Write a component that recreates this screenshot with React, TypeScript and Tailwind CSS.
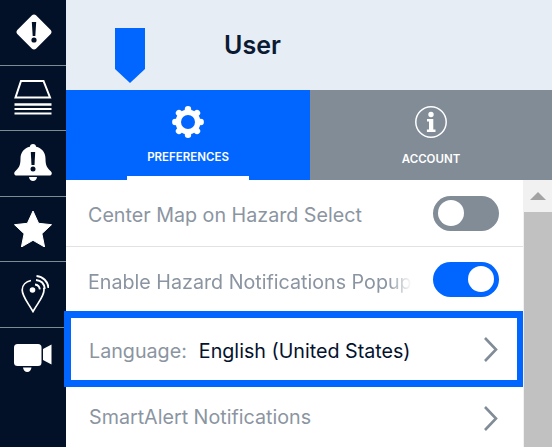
import * as React from "react";

const SideItem = ({ children, last }: { children: React.ReactNode; last?: boolean }) => (
  <div className={`flex h-[65.5px] items-center justify-center ${last ? "" : "border-b border-[#7f8a97]"}`}>
    {children}
  </div>
);

const Toggle = ({ on }: { on?: boolean }) => (
  <div className={`flex h-[35px] w-[66px] items-center rounded-full px-[5px] ${on ? "justify-end bg-[#0066ff]" : "justify-start bg-[#818c97]"}`}>
    <div className="h-[26px] w-[26px] rounded-full bg-white" />
  </div>
);

const Chevron = () => (
  <svg width="15" height="27" viewBox="0 0 15 27" fill="none">
    <path d="M2 2l11 11.5L2 25" stroke="#818c97" strokeWidth="2.6" />
  </svg>
);

export default function App() {
  return (
    <div className="flex h-[447px] w-[552px] overflow-hidden bg-white font-['Inter',sans-serif]">
      <div className="w-[66px] shrink-0 bg-[#021028]">
        <SideItem>
          <svg width="36" height="36" viewBox="0 0 36 36" className="-mr-[1px]">
            <path d="M18 .5c.8 0 1.500.3 2 .8L34.700 16c1.100 1.100 1.100 2.900 0 4L20 34.700c-1.100 1.100-2.900 1.100-4 0L1.300 20c-1.100-1.100-1.100-2.900 0-4L16 1.300c.5-.5 1.200-.8 2-.8z" fill="#fff" />
            <path d="M15.800 8h4.400l-.9 14h-2.600z" fill="#021028" />
            <circle cx="18" cy="26" r="2.600" fill="#021028" />
          </svg>
        </SideItem>
        <SideItem>
          <svg width="38" height="38" viewBox="0 0 38 38" fill="none" className="mt-[-1px]">
            <path d="M7 3h22.500L36 19.500H1.500z" stroke="#fff" strokeWidth="2" />
            <path d="M0.500 26.500h37" stroke="#fff" strokeWidth="2.500" />
            <path d="M0.500 31h37M0.500 35.500h37" stroke="#fff" strokeWidth="2" />
          </svg>
        </SideItem>
        <SideItem>
          <svg width="38" height="37" viewBox="0 0 38 37" className="mt-[-1px]">
            <path d="M19 0c1.900 0 3 1.200 3.100 2.800C27.800 4 31.500 8.500 31.500 14.500c0 7 1.500 9.500 5.300 12.700.6.600 1 1.300 1 2 0 1.500-1.100 2.300-2.600 2.300H2.800C1.300 31.500.2 30.700.2 29.200c0-.7.400-1.400 1-2C5 24 6.500 21.500 6.500 14.500 6.500 8.500 10.200 4 15.900 2.800 16 1.200 17.100 0 19 0z" fill="#fff" />
            <path d="M15 33h8c-.3 2.400-2 4-4 4s-3.700-1.600-4-4z" fill="#fff" />
            <path d="M16.800 8h4.400l-.7 13h-3z" fill="#021028" />
            <circle cx="19" cy="25" r="2.500" fill="#021028" />
          </svg>
        </SideItem>
        <SideItem>
          <svg width="38" height="36" viewBox="0 0 38 36">
            <path d="M19 0l5.600 12.300L37.500 13.700l-9.600 9L30.600 36 19 29.300 7.400 36l2.700-13.300-9.600-9 12.900-1.400z" fill="#fff" stroke="#fff" strokeWidth="1" strokeLinejoin="round" />
          </svg>
        </SideItem>
        <SideItem>
          <svg width="28" height="38" viewBox="0 0 28 38" fill="none" className="ml-[3px]">
            <path d="M10 5.500C5 6.500 1.200 10 1.200 15c0 6 4.300 10.500 10.800 21.500C18.500 25.500 23 21 23 15c0-.8-.1-1.500-.3-2.300" stroke="#fff" strokeWidth="1.700" />
            <circle cx="11.500" cy="15" r="2.800" fill="#fff" />
            <path d="M14 9.500c2.800.3 4.500 2 4.800 4.800M15 5c5 .5 8.300 3.800 8.800 8.800M15.500 1C22 1.500 27 6.500 27.500 13" stroke="#fff" strokeWidth="1.900" />
          </svg>
        </SideItem>
        <SideItem last>
          <svg width="38" height="28" viewBox="0 0 38 28" className="-mt-[4px]">
            <rect x="0" y="0" width="27.500" height="22" rx="3.500" fill="#fff" />
            <path d="M29 5l8.500-4.500v20L29 16z" fill="#fff" />
            <path d="M9 23.500h8.500c-.3 2.500-2 4.500-4.250 4.500S9.300 26 9 23.500z" fill="#fff" />
          </svg>
        </SideItem>
      </div>

      <div className="flex min-w-0 flex-1 flex-col">
        <div className="flex h-[90px] shrink-0 bg-[#e6edf5]">
          <svg width="30" height="55" viewBox="0 0 30 55" className="ml-[49px] mt-[28px]">
            <path d="M0 0h30v41L15 55 0 41z" fill="#0066ff" />
          </svg>
          <div className="ml-[79px] mt-[29px] text-[25px] leading-[32px] font-semibold text-[#0b1a33]">User</div>
        </div>

        <div className="flex h-[90px] shrink-0 text-white">
          <div className="flex h-full w-[244px] flex-col items-center bg-[#0066ff]">
            <svg width="32" height="32" viewBox="0 0 32 32" className="mt-[16px]">
              <circle cx="16" cy="16" r="12.500" fill="#fff" />
              {[0, 45, 90, 135, 180, 225, 270, 315].map((a) => (
                <circle key={a} cx="16" cy="3.300" r="3.200" fill="#fff" transform={`rotate(${a} 16 16)`} />
              ))}
              <circle cx="16" cy="16" r="7" fill="#0066ff" />
            </svg>
            <div className="mt-[12px] text-[11.500px] leading-[14px] font-semibold">PREFERENCES</div>
            <div className="mt-auto h-[4px] w-[122px] bg-white" />
          </div>
          <div className="flex h-full flex-1 flex-col items-center bg-[#818c97]">
            <svg width="32" height="32" viewBox="0 0 32 32" className="mt-[16px]">
              <circle cx="16" cy="16" r="15.200" fill="none" stroke="#fff" strokeWidth="1.500" />
              <circle cx="16" cy="8.500" r="2.700" fill="#fff" />
              <path d="M12 13h6.300v10.500h2.200v2.500h-8.600v-2.500h2.100v-8h-2z" fill="#fff" />
            </svg>
            <div className="mt-[14px] text-[11.500px] leading-[14px] font-semibold">ACCOUNT</div>
          </div>
        </div>

        <div className="flex min-h-0 flex-1">
          <div className="min-w-0 flex-1 text-[#8b95a1]">
            <div className="flex h-[67px] items-center justify-between border-b border-[#e2e2e2] pl-[22px] pr-[24px] text-[19.700px]">
              <span className="mt-[6px]">Center Map on Hazard Select</span>
              <Toggle />
            </div>
            <div className="flex h-[64px] items-center justify-between pl-[22px] pr-[24px] text-[19.700px]">
              <span className="mt-[8px] [mask-image:linear-gradient(to_left,transparent,black_24px)]">Enable Hazard Notifications Popup</span>
              <Toggle on />
            </div>
            <div className="-ml-[2px] -mr-[1px] flex h-[76px] items-center justify-between border-[7px] border-[#0066ff] pl-[18px] pr-[19px] text-[19.700px]">
              <div className="mt-[6px]">
                <span>Language:</span>
                <span className="ml-[12px] text-[#03132e]">English (United States)</span>
              </div>
              <Chevron />
            </div>
            <div className="flex h-[62px] items-center justify-between pl-[23px] pr-[25px] text-[19.700px]">
              <span>SmartAlert Notifications</span>
              <Chevron />
            </div>
          </div>
          <div className="flex w-[29px] shrink-0 flex-col border-l border-[#f1f1f1] bg-[#f1f1f1]">
            <div className="flex h-[32px] items-center justify-center">
              <svg width="16" height="8" viewBox="0 0 16 8"><path d="M8 0l8 8H0z" fill="#a3a3a3" /></svg>
            </div>
            <div className="flex-1 bg-[#c1c1c1]" />
          </div>
        </div>
      </div>
    </div>
  );
}
